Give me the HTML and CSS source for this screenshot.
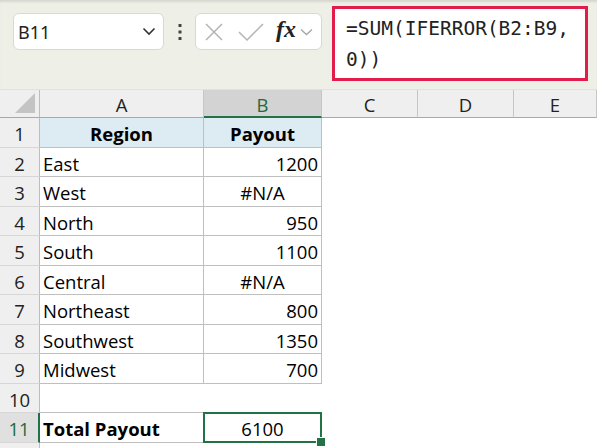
FILE: index.html
```html
<!DOCTYPE html>
<html>
	<head>
		<meta charset="UTF-8">
		<title>Payout</title>
		<link rel="stylesheet" href="styles.css">
	</head>
	<body>
		<div class="toolbar">
			<div class="namebox">
				<span class="ref">B11</span>
				<svg class="chev" width="14" height="9" viewBox="0 0 14 9"><path d="M1.5 1.5 L7 7 L12.5 1.5" fill="none" stroke="#333" stroke-width="1.6"/></svg>
			</div>
			<svg class="dots" width="4" height="18" viewBox="0 0 4 18"><rect x="0.5" y="1" width="3" height="3" fill="#444"/><rect x="0.5" y="7.5" width="3" height="3" fill="#444"/><rect x="0.5" y="14" width="3" height="3" fill="#444"/></svg>
			<div class="fxbox">
				<svg width="20" height="20" viewBox="0 0 20 20"><path d="M2 2 L18 18 M18 2 L2 18" stroke="#b3b3b3" stroke-width="1.5"/></svg>
				<svg class="check" width="26" height="20" viewBox="0 0 26 20"><path d="M1 10 L9 18 L25 2" fill="none" stroke="#b3b3b3" stroke-width="1.5"/></svg>
				<span class="fx">fx</span>
				<svg width="13" height="8" viewBox="0 0 13 8"><path d="M1 1.5 L6.5 6.5 L12 1.5" fill="none" stroke="#a5a5a5" stroke-width="1.3"/></svg>
			</div>
			<div class="formula">=SUM(IFERROR(B2:B9,<br>0))</div>
		</div>

		<div class="sheet">
			<!-- column headers -->
			<div class="corner"></div>
			<div class="colhead">A</div>
			<div class="colhead sel">B</div>
			<div class="colhead">C</div>
			<div class="colhead">D</div>
			<div class="colhead">E</div>

			<div class="rowhead">1</div>
			<div class="cell tb title">Region</div>
			<div class="cell tb title">Payout</div>
			<div class="cell blank"></div>

			<div class="rowhead">2</div>
			<div class="cell tb">East</div>
			<div class="cell tb num">1200</div>
			<div class="cell blank"></div>

			<div class="rowhead">3</div>
			<div class="cell tb">West</div>
			<div class="cell tb err">#N/A</div>
			<div class="cell blank"></div>

			<div class="rowhead">4</div>
			<div class="cell tb">North</div>
			<div class="cell tb num">950</div>
			<div class="cell blank"></div>

			<div class="rowhead">5</div>
			<div class="cell tb">South</div>
			<div class="cell tb num">1100</div>
			<div class="cell blank"></div>

			<div class="rowhead">6</div>
			<div class="cell tb">Central</div>
			<div class="cell tb err">#N/A</div>
			<div class="cell blank"></div>

			<div class="rowhead">7</div>
			<div class="cell tb">Northeast</div>
			<div class="cell tb num">800</div>
			<div class="cell blank"></div>

			<div class="rowhead">8</div>
			<div class="cell tb">Southwest</div>
			<div class="cell tb num">1350</div>
			<div class="cell blank"></div>

			<div class="rowhead">9</div>
			<div class="cell tb">Midwest</div>
			<div class="cell tb num">700</div>
			<div class="cell blank"></div>

			<div class="rowhead">10</div>
			<div class="cell under"></div>
			<div class="cell under"></div>
			<div class="cell blank"></div>

			<div class="rowhead sel">11</div>
			<div class="cell tb bold">Total Payout</div>
			<div class="cell tb active">6100</div>
			<div class="cell blank"></div>

			<div class="rowhead"></div>
			<div class="cell"></div>
			<div class="cell"></div>
			<div class="cell blank"></div>
		</div>
	</body>
</html>
```

FILE: styles.css
```css
* {
	margin: 0;
	padding: 0;
	box-sizing: border-box;
}

body {
	width: 597px;
	height: 448px;
	overflow: hidden;
	background: #fff;
	font-family: "Open Sans", "Noto Sans", sans-serif;
}

/* formula bar */
.toolbar {
	height: 90px;
	background: #eeefe6;
	box-shadow: inset 0 3px 2px -1px #d6d7cf;
	display: flex;
	align-items: flex-start;
	padding: 13px 0 0 13px;
	border-bottom: 1px solid #e2e2dc;
}

.namebox {
	width: 151px;
	height: 37px;
	background: #fff;
	border: 1px solid #d9d9d3;
	border-radius: 6px;
	display: flex;
	align-items: center;
	justify-content: space-between;
	padding: 0 7px 0 4px;
}

.ref {
	font-family: "Noto Sans", sans-serif;
	font-size: 18px;
	color: #222;
}

.dots {
	margin: 10px 0 0 14px;
}

.fxbox {
	width: 127px;
	height: 37px;
	margin-left: 13px;
	background: #fff;
	border: 1px solid #d9d9d3;
	border-radius: 6px;
	display: flex;
	align-items: center;
	padding: 0 4px 0 8px;
}

.check {
	margin-left: 14px;
}

.fx {
	font-family: "Liberation Serif", serif;
	font-style: italic;
	font-weight: bold;
	font-size: 24px;
	color: #222;
	margin: -4px 4px 0 12px;
}

.formula {
	width: 256px;
	height: 75px;
	margin: -7px 0 0 10px;
	background: #fff;
	border: 3px solid #e21c4b;
	font-family: "DejaVu Sans Mono", monospace;
	font-size: 19.5px;
	line-height: 31px;
	color: #222;
	padding: 4px 0 0 11px;
}

/* sheet */
.sheet {
	display: grid;
	grid-template-columns: 40px 164px 118px 96px 96px 83px;
	grid-template-rows: 28px repeat(11, 29.5px) 20px;
	font-size: 18.5px;
	color: #000;
}

.corner {
	background: #efefef;
	border-right: 1px solid #bdbdbd;
	border-bottom: 1px solid #a8a8a8;
	position: relative;
}

.corner::after {
	content: "";
	position: absolute;
	right: 4px;
	bottom: 4px;
	border-left: 20px solid transparent;
	border-bottom: 20px solid #c4c4c4;
}

.colhead {
	background: #efefef;
	border-right: 1px solid #c6c6c6;
	border-bottom: 1px solid #a8a8a8;
	text-align: center;
	line-height: 27px;
	padding-top: 1px;
	color: #222;
}

.colhead.sel {
	background: #d3d3d3;
	color: #1d6b3f;
	border-bottom: 2px solid #217346;
}

.rowhead {
	grid-column: 1;
	background: #efefef;
	border-right: 1px solid #bdbdbd;
	border-bottom: 1px solid #d6d6d6;
	text-align: center;
	line-height: 29px;
	padding-top: 1px;
	color: #222;
}

.rowhead.sel {
	background: #e0e0e0;
	color: #1d6b3f;
	border-right: 2px solid #217346;
}

.cell {
	line-height: 29px;
	padding: 1px 3px 0;
	white-space: nowrap;
}

.cell.blank {
	grid-column: 4 / 7;
}

.cell.tb {
	border-right: 1px solid #bfbfbf;
	border-bottom: 1px solid #bfbfbf;
}

.cell.under {
	border-bottom: 1px solid #bfbfbf;
}

.title {
	background: #ddebf2;
	font-weight: bold;
	text-align: center;
}

.bold {
	font-weight: bold;
}

.num {
	text-align: right;
}

.err {
	text-align: center;
}

.active {
	text-align: center;
	position: relative;
}

.active::before {
	content: "";
	position: absolute;
	left: -1px;
	top: -1px;
	right: -1px;
	bottom: -1px;
	border: 2px solid #217346;
}

.active::after {
	content: "";
	position: absolute;
	right: -5px;
	bottom: -5px;
	width: 8px;
	height: 8px;
	background: #217346;
	border: 1px solid #fff;
}
```
